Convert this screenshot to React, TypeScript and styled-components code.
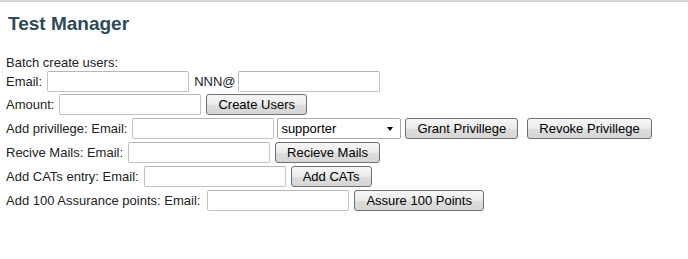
import { createGlobalStyle } from 'styled-components';
import styled from 'styled-components';

const GlobalStyle = createGlobalStyle`
  html, body {
    margin: 0;
    padding: 0;
    background: #ffffff;
  }
  body {
    font-family: "Liberation Sans", Arial, sans-serif;
    font-size: 13px;
    color: #222;
  }
`;

const Page = styled.div`
  border-top: 2px solid #d6d6d6;
  padding: 0 6px;
`;

const Title = styled.h1`
  margin: 11px 0 0 2px;
  font-size: 19px;
  line-height: 22px;
  font-weight: bold;
  color: #2e4a58;
`;

const Form = styled.div`
  margin-top: 20px;
  display: flex;
  flex-direction: column;
`;

const Heading = styled.div`
  line-height: 15px;
`;

const Row = styled.div<{ $h?: number }>`
  display: flex;
  align-items: center;
  height: ${(p) => p.$h ?? 24}px;
  white-space: nowrap;
`;

const Label = styled.span<{ $gap?: number }>`
  margin-right: ${(p) => p.$gap ?? 5}px;
`;

const TextInput = styled.input<{ $gap?: number }>`
  box-sizing: border-box;
  width: 142px;
  height: 21px;
  margin: 0 ${(p) => p.$gap ?? 5}px 0 0;
  padding: 1px 3px;
  border: 1px solid #c3c3c3;
  border-top-color: #b5b5b5;
  border-radius: 2px;
  background: #fff;
  font: 13px "Liberation Sans", Arial, sans-serif;
  outline: none;
`;

const SelectWrap = styled.div`
  position: relative;
  margin-right: 4px;
`;

const Select = styled.select`
  box-sizing: border-box;
  width: 124px;
  height: 21px;
  padding: 0 0 0 3px;
  border: 1px solid #a9a9a9;
  border-radius: 2px;
  background: #fff;
  color: #000;
  font: 13px "Liberation Sans", Arial, sans-serif;
  appearance: none;
  -webkit-appearance: none;
  outline: none;
`;

const Arrow = styled.span`
  position: absolute;
  right: 8px;
  top: 9px;
  width: 0;
  height: 0;
  border-left: 3.5px solid transparent;
  border-right: 3.5px solid transparent;
  border-top: 4px solid #000;
  pointer-events: none;
`;

const Button = styled.button<{ $gap?: number }>`
  box-sizing: border-box;
  height: 21px;
  margin: 0 ${(p) => p.$gap ?? 0}px 0 0;
  padding: 0 11px;
  border: 1px solid #707070;
  border-radius: 3px;
  background: linear-gradient(#f6f6f6 0%, #ebebeb 50%, #dddddd 51%, #d6d6d6 100%);
  color: #000;
  font: 13px "Liberation Sans", Arial, sans-serif;
  line-height: 19px;
`;

export default function App() {
  return (
    <>
      <GlobalStyle />
      <Page>
        <Title>Test Manager</Title>
        <Form>
          <Heading>Batch create users:</Heading>
          <Row $h={23}>
            <Label>Email:</Label>
            <TextInput type="text" />
            <Label $gap={2}>NNN@</Label>
            <TextInput type="text" />
          </Row>
          <Row $h={23}>
            <Label>Amount:</Label>
            <TextInput type="text" />
            <Button>Create Users</Button>
          </Row>
          <Row>
            <Label>Add privillege: Email:</Label>
            <TextInput type="text" $gap={3} />
            <SelectWrap>
              <Select defaultValue="supporter">
                <option value="supporter">supporter</option>
                <option value="admin">admin</option>
              </Select>
              <Arrow />
            </SelectWrap>
            <Button $gap={9}>Grant Privillege</Button>
            <Button>Revoke Privillege</Button>
          </Row>
          <Row>
            <Label>Recive Mails: Email:</Label>
            <TextInput type="text" />
            <Button>Recieve Mails</Button>
          </Row>
          <Row>
            <Label>Add CATs entry: Email:</Label>
            <TextInput type="text" />
            <Button>Add CATs</Button>
          </Row>
          <Row>
            <Label $gap={7}>Add 100 Assurance points: Email:</Label>
            <TextInput type="text" />
            <Button>Assure 100 Points</Button>
          </Row>
        </Form>
      </Page>
    </>
  );
}
